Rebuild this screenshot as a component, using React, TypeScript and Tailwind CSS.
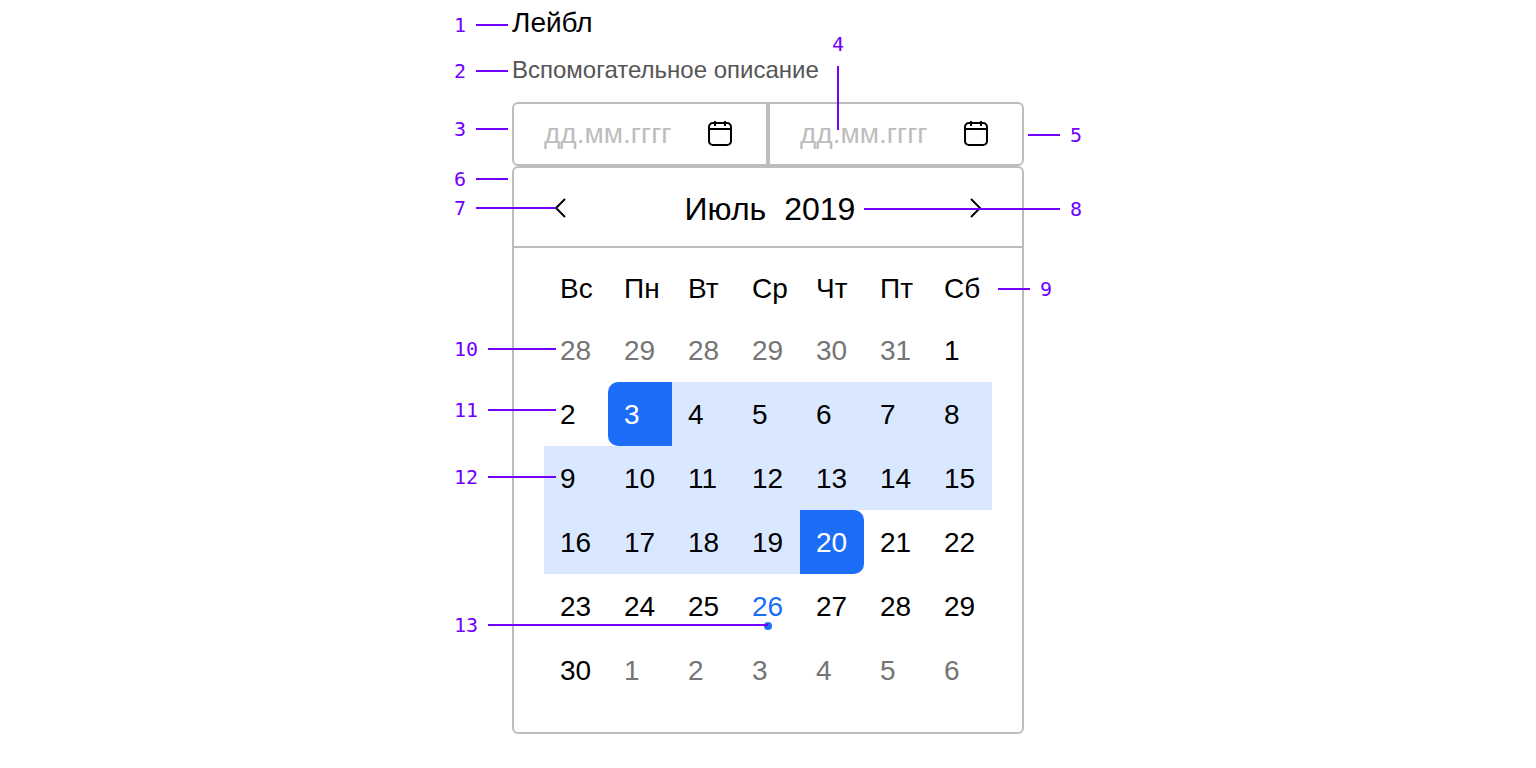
import { clsx } from 'clsx';

type DayKind = 'default' | 'outside' | 'range' | 'start' | 'end' | 'today';

interface Day {
  value: number;
  kind: DayKind;
}

interface Callout {
  number: number;
  position: string;
  line: string;
  direction: string;
}

const WEEKDAYS = ['Вс', 'Пн', 'Вт', 'Ср', 'Чт', 'Пт', 'Сб'];

const RANGE_START = 3;
const RANGE_END = 20;
const TODAY = 26;

function currentDay(value: number): Day {
  if (value === RANGE_START) return { value, kind: 'start' };
  if (value === RANGE_END) return { value, kind: 'end' };
  if (value === TODAY) return { value, kind: 'today' };
  if (value > RANGE_START && value < RANGE_END) return { value, kind: 'range' };
  return { value, kind: 'default' };
}

function outsideDay(value: number): Day {
  return { value, kind: 'outside' };
}

const DAYS: Day[] = [
  ...[28, 29, 28, 29, 30, 31].map(outsideDay),
  ...Array.from({ length: 30 }, (_, index) => currentDay(index + 1)),
  ...[1, 2, 3, 4, 5, 6].map(outsideDay),
];

const WEEKS = Array.from({ length: 6 }, (_, week) => DAYS.slice(week * 7, week * 7 + 7));

const DAY_STYLES: Record<DayKind, string> = {
  default: 'text-black',
  outside: 'text-[#757575]',
  range: 'bg-[#d9e7ff] text-black',
  start: 'rounded-l-[10px] bg-[#1c6ef9] text-white',
  end: 'rounded-r-[10px] bg-[#1c6ef9] text-white',
  today: 'text-[#1c6ef9]',
};

const CALLOUTS: Callout[] = [
  { number: 1, position: '-left-[58px] top-[13px]', line: 'h-0.5 w-8', direction: 'flex-row' },
  { number: 2, position: '-left-[58px] top-[59px]', line: 'h-0.5 w-8', direction: 'flex-row' },
  { number: 3, position: '-left-[58px] top-[117px]', line: 'h-0.5 w-8', direction: 'flex-row' },
  { number: 4, position: 'left-[320px] top-[32px]', line: 'h-16 w-0.5', direction: 'flex-col' },
  { number: 5, position: 'left-[516px] top-[123px]', line: 'h-0.5 w-8', direction: 'flex-row-reverse' },
  { number: 6, position: '-left-[58px] top-[167px]', line: 'h-0.5 w-8', direction: 'flex-row' },
  { number: 7, position: '-left-[58px] top-[196px]', line: 'h-0.5 w-20', direction: 'flex-row' },
  { number: 8, position: 'left-[352px] top-[197px]', line: 'h-0.5 w-[196px]', direction: 'flex-row-reverse' },
  { number: 9, position: 'left-[486px] top-[277px]', line: 'h-0.5 w-8', direction: 'flex-row-reverse' },
  { number: 10, position: '-left-[58px] top-[337px]', line: 'h-0.5 w-[68px]', direction: 'flex-row' },
  { number: 11, position: '-left-[58px] top-[398px]', line: 'h-0.5 w-[68px]', direction: 'flex-row' },
  { number: 12, position: '-left-[58px] top-[465px]', line: 'h-0.5 w-[68px]', direction: 'flex-row' },
  { number: 13, position: '-left-[58px] top-[613px]', line: 'h-0.5 w-[280px]', direction: 'flex-row' },
];

function CalendarIcon() {
  return (
    <svg width="24" height="28" viewBox="0 0 24 28" fill="none" stroke="black" strokeWidth="2" aria-hidden="true">
      <rect x="1" y="3" width="22" height="22" rx="4" />
      <path d="M1 9H23M7 1V6M17 1V6" />
    </svg>
  );
}

function Chevron({ d }: { d: string }) {
  return (
    <svg width="12" height="20" viewBox="0 0 12 20" fill="none" stroke="black" strokeWidth="2" aria-hidden="true">
      <path d={d} />
    </svg>
  );
}

function DateField({ label, className }: { label: string; className: string }) {
  return (
    <div className={clsx('flex h-16 min-w-0 flex-1 items-center border-2 border-[#bdbdbd] pr-[34px] pl-[30px]', className)}>
      <input
        type="text"
        aria-label={label}
        placeholder="дд.мм.гггг"
        className="h-full w-full min-w-0 flex-1 text-[28px] outline-none placeholder:text-[#bdbdbd]"
      />
      <button type="button" aria-label="Открыть календарь">
        <CalendarIcon />
      </button>
    </div>
  );
}

function CalendarPanel() {
  return (
    <section aria-label="Календарь" className="rounded-md border-2 border-[#bdbdbd]">
      <div className="flex h-20 items-center justify-between border-b-2 border-[#bdbdbd] px-10 pt-0.5">
        <button type="button" aria-label="Предыдущий месяц">
          <Chevron d="M11 1L2 10L11 19" />
        </button>
        <h2 className="flex gap-[18px] pt-0.5 pl-1 text-[32px] leading-10">
          <span>Июль</span>
          <span>2019</span>
        </h2>
        <button type="button" aria-label="Следующий месяц">
          <Chevron d="M1 1L10 10L1 19" />
        </button>
      </div>
      <div className="px-[30px] pt-2.5 pb-[30px]">
        <table className="w-full table-fixed text-left text-[28px]">
          <thead>
            <tr>
              {WEEKDAYS.map((weekday) => (
                <th key={weekday} scope="col" className="h-[60px] pt-0.5 pl-4 font-normal">
                  {weekday}
                </th>
              ))}
            </tr>
          </thead>
          <tbody>
            {WEEKS.map((week, weekIndex) => (
              <tr key={weekIndex}>
                {week.map((day, dayIndex) => (
                  <td key={dayIndex} className="p-0">
                    <button
                      type="button"
                      className={clsx('relative block h-16 w-full pt-0.5 pl-4 text-left', DAY_STYLES[day.kind])}
                    >
                      {day.value}
                      {day.kind === 'today' && (
                        <span className="absolute bottom-2 left-7 size-2 rounded-full bg-[#1c6ef9]" />
                      )}
                    </button>
                  </td>
                ))}
              </tr>
            ))}
          </tbody>
        </table>
      </div>
    </section>
  );
}

export default function App() {
  return (
    <main className="bg-white px-16 pb-8 font-['Liberation_Sans',Arial,sans-serif] text-black">
      <div className="relative mx-auto w-full max-w-[512px]">
        <h1 className="text-[28px] leading-[46px]">Лейбл</h1>
        <p className="mt-2 text-2xl leading-8 text-[#555555]">Вспомогательное описание</p>
        <div className="mt-4 flex">
          <DateField label="Дата начала" className="rounded-l-md" />
          <DateField label="Дата окончания" className="rounded-r-md" />
        </div>
        <CalendarPanel />

        {/* Numbered callouts lie over the control and its margins */}
        {CALLOUTS.map(({ number, position, line, direction }) => (
          <div
            key={number}
            className={clsx(
              "pointer-events-none absolute flex items-center gap-2.5 font-['DejaVu_Sans_Mono',monospace] text-xl leading-6 text-[#7000ff]",
              position,
              direction
            )}
          >
            <span>{number}</span>
            <span className={clsx('shrink-0 bg-[#7000ff]', line)} />
          </div>
        ))}
      </div>
    </main>
  );
}
